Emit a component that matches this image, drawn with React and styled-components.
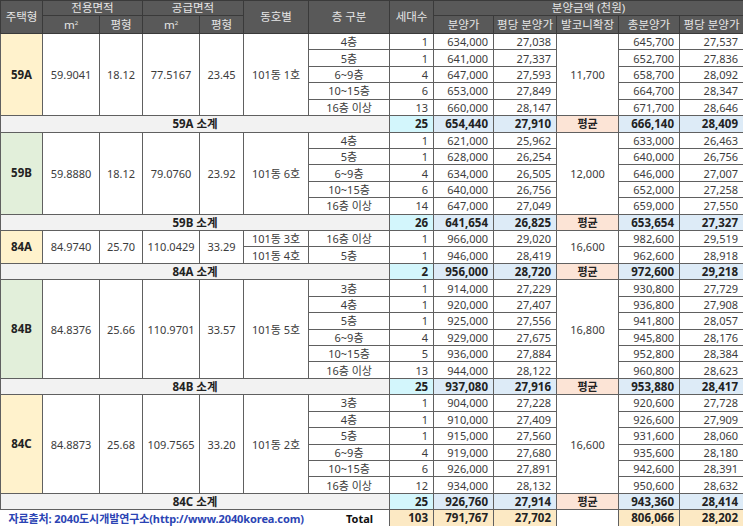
import React from "react";
import styled, { createGlobalStyle } from "styled-components";

const GlobalStyle = createGlobalStyle`
  html, body {
    margin: 0;
    padding: 0;
    background: #ffffff;
  }
  body {
    font-family: "Noto Sans", "Noto Sans CJK KR", sans-serif;
  }
`;

const tones = {
  yellow: "#fff2cc",
  green: "#e2efda",
};

const groups = [
  {
    type: "59A",
    tone: "yellow",
    ex: "59.9041",
    ep: "18.12",
    sx: "77.5167",
    sp: "23.45",
    dong: "101동 1호",
    balcony: "11,700",
    rows: [
      ["4층", 1, "634,000", "27,038", "645,700", "27,537"],
      ["5층", 1, "641,000", "27,337", "652,700", "27,836"],
      ["6~9층", 4, "647,000", "27,593", "658,700", "28,092"],
      ["10~15층", 6, "653,000", "27,849", "664,700", "28,347"],
      ["16층 이상", 13, "660,000", "28,147", "671,700", "28,646"],
    ],
    sub: ["25", "654,440", "27,910", "666,140", "28,409"],
  },
  {
    type: "59B",
    tone: "green",
    ex: "59.8880",
    ep: "18.12",
    sx: "79.0760",
    sp: "23.92",
    dong: "101동 6호",
    balcony: "12,000",
    rows: [
      ["4층", 1, "621,000", "25,962", "633,000", "26,463"],
      ["5층", 1, "628,000", "26,254", "640,000", "26,756"],
      ["6~9층", 4, "634,000", "26,505", "646,000", "27,007"],
      ["10~15층", 6, "640,000", "26,756", "652,000", "27,258"],
      ["16층 이상", 14, "647,000", "27,049", "659,000", "27,550"],
    ],
    sub: ["26", "641,654", "26,825", "653,654", "27,327"],
  },
  {
    type: "84A",
    tone: "yellow",
    ex: "84.9740",
    ep: "25.70",
    sx: "110.0429",
    sp: "33.29",
    dong: null,
    balcony: "16,600",
    rows: [
      ["16층 이상", 1, "966,000", "29,020", "982,600", "29,519", "101동 3호"],
      ["5층", 1, "946,000", "28,419", "962,600", "28,918", "101동 4호"],
    ],
    sub: ["2", "956,000", "28,720", "972,600", "29,218"],
  },
  {
    type: "84B",
    tone: "green",
    ex: "84.8376",
    ep: "25.66",
    sx: "110.9701",
    sp: "33.57",
    dong: "101동 5호",
    balcony: "16,800",
    rows: [
      ["3층", 1, "914,000", "27,229", "930,800", "27,729"],
      ["4층", 1, "920,000", "27,407", "936,800", "27,908"],
      ["5층", 1, "925,000", "27,556", "941,800", "28,057"],
      ["6~9층", 4, "929,000", "27,675", "945,800", "28,176"],
      ["10~15층", 5, "936,000", "27,884", "952,800", "28,384"],
      ["16층 이상", 13, "944,000", "28,122", "960,800", "28,623"],
    ],
    sub: ["25", "937,080", "27,916", "953,880", "28,417"],
  },
  {
    type: "84C",
    tone: "yellow",
    ex: "84.8873",
    ep: "25.68",
    sx: "109.7565",
    sp: "33.20",
    dong: "101동 2호",
    balcony: "16,600",
    rows: [
      ["3층", 1, "904,000", "27,228", "920,600", "27,728"],
      ["4층", 1, "910,000", "27,409", "926,600", "27,909"],
      ["5층", 1, "915,000", "27,560", "931,600", "28,060"],
      ["6~9층", 4, "919,000", "27,680", "935,600", "28,180"],
      ["10~15층", 6, "926,000", "27,891", "942,600", "28,391"],
      ["16층 이상", 12, "934,000", "28,132", "950,600", "28,632"],
    ],
    sub: ["25", "926,760", "27,914", "943,360", "28,414"],
  },
];

const widths = [42, 57, 43, 57, 44, 65, 81, 44, 60, 63, 62, 61, 64];

function PriceTable() {
  return (
    <Table>
      <colgroup>
        {widths.map((w, i) => (
          <col key={i} style={{ width: w }} />
        ))}
      </colgroup>
      <thead>
        <HeadRow $h={15}>
          <Th rowSpan={2}>주택형</Th>
          <Th colSpan={2}>전용면적</Th>
          <Th colSpan={2}>공급면적</Th>
          <Th rowSpan={2}>동호별</Th>
          <Th rowSpan={2}>층 구분</Th>
          <Th rowSpan={2}>세대수</Th>
          <Th colSpan={5}>분양금액 (천원)</Th>
        </HeadRow>
        <HeadRow $h={18}>
          <Th>m<sup>2</sup></Th>
          <Th>평형</Th>
          <Th>m<sup>2</sup></Th>
          <Th>평형</Th>
          <Th>분양가</Th>
          <Th>평당 분양가</Th>
          <Th>발코니확장</Th>
          <Th>총분양가</Th>
          <Th>평당 분양가</Th>
        </HeadRow>
      </thead>
      <tbody>
        {groups.map((g) => {
          const n = g.rows.length;
          return (
            <React.Fragment key={g.type}>
              {g.rows.map((r, i) => (
                <Row key={i}>
                  {i === 0 && (
                    <>
                      <TypeCell rowSpan={n} $tone={g.tone}>{g.type}</TypeCell>
                      <Cell rowSpan={n}>{g.ex}</Cell>
                      <Cell rowSpan={n}>{g.ep}</Cell>
                      <Cell rowSpan={n}>{g.sx}</Cell>
                      <Cell rowSpan={n}>{g.sp}</Cell>
                      {g.dong && <Cell rowSpan={n}>{g.dong}</Cell>}
                    </>
                  )}
                  {!g.dong && <Cell>{r[6]}</Cell>}
                  <Cell>{r[0]}</Cell>
                  <Num>{r[1]}</Num>
                  <Num>{r[2]}</Num>
                  <Num>{r[3]}</Num>
                  {i === 0 && <Cell rowSpan={n}>{g.balcony}</Cell>}
                  <Num>{r[4]}</Num>
                  <Num>{r[5]}</Num>
                </Row>
              ))}
              <Row>
                <SubLabel colSpan={7}>{g.type} 소계</SubLabel>
                <SubNum $bg="#d3f6fc">{g.sub[0]}</SubNum>
                <SubNum $bg="#ddebf7">{g.sub[1]}</SubNum>
                <SubNum $bg="#ddebf7">{g.sub[2]}</SubNum>
                <AvgCell>평균</AvgCell>
                <SubNum $bg="#ddebf7">{g.sub[3]}</SubNum>
                <SubNum $bg="#ddebf7">{g.sub[4]}</SubNum>
              </Row>
            </React.Fragment>
          );
        })}
        <Row>
          <Source colSpan={6}>자료출처: 2040도시개발연구소(http://www.2040korea.com)</Source>
          <TotalLabel>Total</TotalLabel>
          <SubNum $bg="#fce9c4">103</SubNum>
          <SubNum $bg="#fce9c4">791,767</SubNum>
          <SubNum $bg="#fce9c4">27,702</SubNum>
          <Cell />
          <SubNum $bg="#fce9c4">806,066</SubNum>
          <SubNum $bg="#fce9c4">28,202</SubNum>
        </Row>
      </tbody>
    </Table>
  );
}

export default function App() {
  return (
    <>
      <GlobalStyle />
      <PriceTable />
    </>
  );
}

const Table = styled.table`
  width: 743px;
  table-layout: fixed;
  border-collapse: collapse;
  font-size: 11px;
  color: #3c3c3c;
`;

const HeadRow = styled.tr`
  height: ${(p) => p.$h}px;
`;

const Th = styled.th`
  background: #595959;
  color: #e6e6e6;
  font-weight: 400;
  font-size: 11.5px;
  border: 1px solid #3a3a3a;
  padding: 0;
  line-height: 1;
  white-space: nowrap;
  sup {
    font-size: 6px;
    vertical-align: 4px;
  }
`;

const Row = styled.tr`
  height: 16.43px;
`;

const Cell = styled.td`
  border: 1px solid #606060;
  padding: 0 3px;
  line-height: 1;
  text-align: center;
  white-space: nowrap;
  background: #ffffff;
`;

const TypeCell = styled(Cell)`
  background: ${(p) => tones[p.$tone]};
  font-weight: 700;
  font-size: 11.5px;
  color: #222;
`;

const Num = styled(Cell)`
  text-align: right;
  padding-right: 5px;
`;

const SubLabel = styled(Cell)`
  background: #f2f2f2;
  font-weight: 700;
  font-size: 11.5px;
  color: #222;
  text-align: center;
`;

const SubNum = styled(Num)`
  background: ${(p) => p.$bg};
  font-weight: 700;
  font-size: 11.5px;
  color: #222;
`;

const AvgCell = styled(Cell)`
  background: #fce4d6;
  font-weight: 700;
  color: #222;
`;

const Source = styled.td`
  padding: 0 0 0 8px;
  text-align: left;
  white-space: nowrap;
  color: #2b44b4;
  font-weight: 700;
  font-size: 11px;
  letter-spacing: -0.1px;
  border: none;
`;

const TotalLabel = styled.td`
  padding: 0 16px 0 0;
  text-align: right;
  font-weight: 700;
  color: #111;
  border: none;
  border-right: 1px solid #606060;
`;
